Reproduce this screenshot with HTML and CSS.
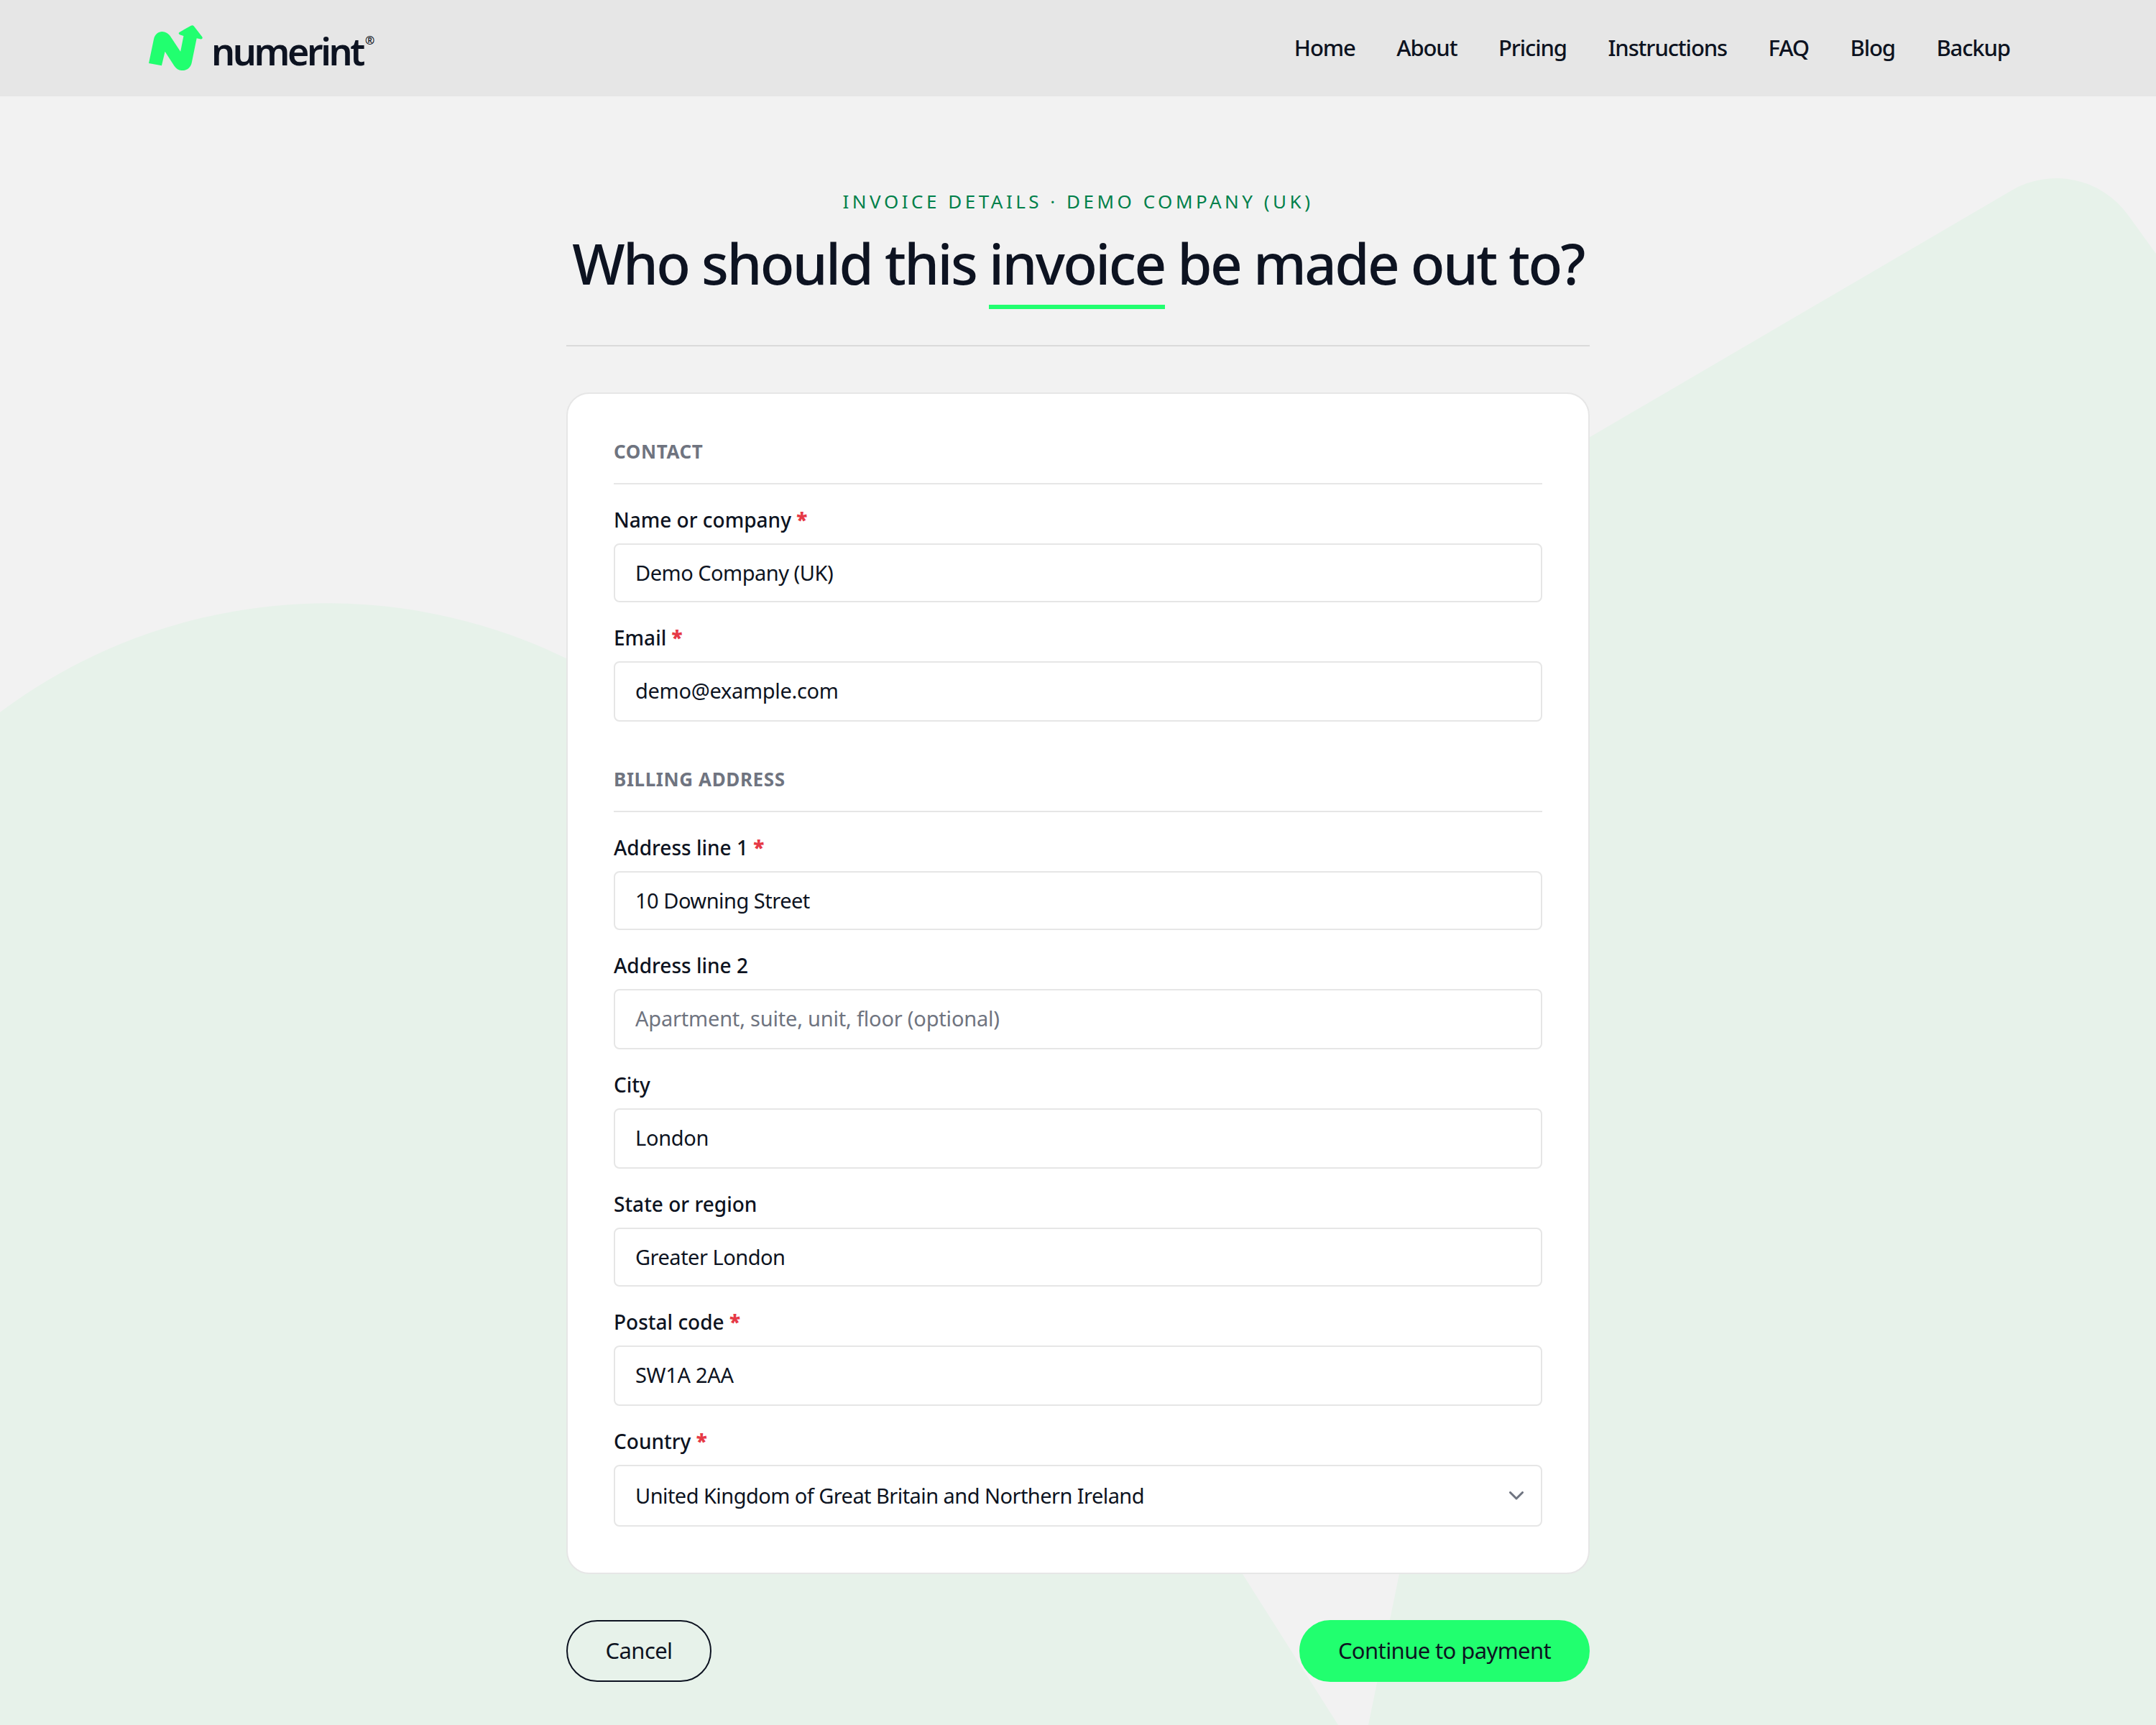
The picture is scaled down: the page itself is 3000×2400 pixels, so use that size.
FILE: index.html
```html
<!DOCTYPE html>
<html lang="en">

<head>
	<meta charset="UTF-8">
	<meta name="viewport" content="width=device-width, initial-scale=1.0">
	<title>Invoice details - numerint</title>
	<link rel="stylesheet" href="styles.css">
</head>

<body>
	<svg class="backdrop" viewBox="0 0 3000 2400" aria-hidden="true">
		<path d="M0 991A760 760 0 0 1 1099 1195L1862 2400H0Z" />
		<path d="M1904 2400L2190 1003L1850 820L2799 265A123 123 0 0 1 2961 299L3000 353V2400Z" />
	</svg>

	<header class="header">
		<a class="logo" href="#">
			<svg class="logo-mark" viewBox="80 74 226 190" aria-hidden="true">
				<path d="M80 234L101 133C109 94 153 90 174 126L213 185L226 119L210 114Q202 109 208 104L257 76Q264 72 269 78L304 123Q308 132 299 133L281 129L260 232C252 268 207 276 187 245L148 185L134 244Z" />
			</svg>
			<span class="logo-text">numerint</span><span class="logo-reg">®</span>
		</a>
		<nav class="nav">
			<a href="#">Home</a>
			<a href="#">About</a>
			<a href="#">Pricing</a>
			<a href="#">Instructions</a>
			<a href="#">FAQ</a>
			<a href="#">Blog</a>
			<a href="#">Backup</a>
		</nav>
	</header>

	<main class="page">
		<div class="intro">
			<p class="eyebrow">Invoice details · Demo Company (UK)</p>
			<h1>Who should this <span class="mark">invoice</span> be made out to?</h1>
		</div>

		<form>
			<div class="card">
				<section>
					<h2>Contact</h2>
					<div class="field">
						<label for="name">Name or company <b>*</b></label>
						<input type="text" id="name" value="Demo Company (UK)" required>
					</div>
					<div class="field tall">
						<label for="email">Email <b>*</b></label>
						<input type="email" id="email" value="demo@example.com" required>
					</div>
				</section>
				<section>
					<h2>Billing address</h2>
					<div class="field">
						<label for="line1">Address line 1 <b>*</b></label>
						<input type="text" id="line1" value="10 Downing Street" required>
					</div>
					<div class="field tall">
						<label for="line2">Address line 2</label>
						<input type="text" id="line2" placeholder="Apartment, suite, unit, floor (optional)">
					</div>
					<div class="field tall">
						<label for="city">City</label>
						<input type="text" id="city" value="London">
					</div>
					<div class="field">
						<label for="state">State or region</label>
						<input type="text" id="state" value="Greater London">
					</div>
					<div class="field tall">
						<label for="postal">Postal code <b>*</b></label>
						<input type="text" id="postal" value="SW1A 2AA" required>
					</div>
					<div class="field">
						<label for="country">Country <b>*</b></label>
						<div class="select">
							<select id="country" required>
								<option>United Kingdom of Great Britain and Northern Ireland</option>
							</select>
							<svg class="chevron" viewBox="0 0 20 12" aria-hidden="true">
								<path d="M1.500 1.500L10 10L18.500 1.500" />
							</svg>
						</div>
					</div>
				</section>
			</div>

			<div class="actions">
				<button type="button" class="btn outline">Cancel</button>
				<button type="submit" class="btn primary">Continue to payment</button>
			</div>
		</form>
	</main>
</body>

</html>
```
FILE: styles.css
```css
:root {
	--ink: #0d1321;
	--green: #21ff6f;
	--muted: #6f7480;
	--line: #e6e6e6;
}

*,
*:before,
*:after {
	box-sizing: border-box;
}

body,
h1,
h2,
p {
	margin: 0;
	font-weight: normal;
}

body {
	position: relative;
	height: 2400px;
	overflow: hidden;
	color: var(--ink);
	background: #f2f2f2;
	font-family: "Noto Sans", sans-serif;
}

a {
	color: inherit;
	text-decoration: none;
}

.backdrop {
	position: absolute;
	top: 0;
	left: 0;
	z-index: -1;
	width: 3000px;
	height: 2400px;
	fill: #e7f2ea;
}

/* header */

.header {
	display: flex;
	justify-content: space-between;
	height: 134px;
	padding: 0 203px 0 207px;
	background: #e6e6e6;
}

.logo {
	display: flex;
}

.logo-mark {
	width: 75px;
	height: 63px;
	margin: 35px 12px 0 0;
	fill: var(--green);
}

.logo-text {
	font-size: 52px;
	font-weight: 600;
	line-height: 142px;
	letter-spacing: -3.4px;
}

.logo-reg {
	margin: 46px 0 0 3px;
	font-size: 16px;
	font-weight: 600;
	line-height: 20px;
}

.nav {
	display: flex;
	gap: 57.5px;
	font-size: 31px;
	font-weight: 500;
	line-height: 132px;
	letter-spacing: -1.1px;
}

/* intro */

.page {
	width: 1424px;
	margin: 0 auto;
	padding-top: 126px;
}

.intro {
	padding-bottom: 64px;
	border-bottom: 2px solid #dadada;
	text-align: center;
	white-space: nowrap;
}

.eyebrow {
	margin-bottom: 16px;
	color: #00804a;
	font-size: 26px;
	line-height: 40px;
	letter-spacing: 4.5px;
	text-transform: uppercase;
}

h1 {
	font-size: 78px;
	font-weight: 500;
	line-height: 100px;
	letter-spacing: -2.6px;
}

.mark {
	padding-bottom: 5px;
	border-bottom: 6px solid var(--green);
}

/* form */

.card {
	margin-top: 64px;
	padding: 64px;
	border: 2px solid var(--line);
	border-radius: 32px;
	background: #fff;
}

section + section {
	margin-top: 64px;
}

h2 {
	padding-bottom: 28px;
	border-bottom: 2px solid var(--line);
	color: var(--muted);
	font-size: 26px;
	font-weight: 700;
	line-height: 32px;
	letter-spacing: 0.6px;
	text-transform: uppercase;
}

.field {
	display: flex;
	flex-direction: column;
	gap: 15px;
	margin-top: 31px;
}

label {
	font-size: 28px;
	font-weight: 500;
	line-height: 36px;
}

label b {
	color: #e63946;
	font-weight: 900;
}

input,
select {
	width: 100%;
	height: 82px;
	margin: 0;
	padding: 0 28px 2px;
	border: 2px solid var(--line);
	border-radius: 8px;
	color: var(--ink);
	background: #fff;
	font: inherit;
	font-size: 29px;
	letter-spacing: -0.5px;
}

.tall input {
	height: 84px;
	padding-bottom: 4px;
	letter-spacing: -0.3px;
}

input::placeholder {
	color: var(--muted);
	letter-spacing: -0.2px;
	opacity: 1;
}

.select {
	display: grid;
	align-items: center;
}

.select > * {
	grid-area: 1 / 1;
}

select {
	height: 86px;
	letter-spacing: -0.55px;
	appearance: none;
}

.chevron {
	justify-self: end;
	width: 20px;
	height: 12px;
	margin-right: 26px;
	fill: none;
	stroke: var(--muted);
	stroke-width: 3;
	stroke-linecap: round;
	stroke-linejoin: round;
}

.actions {
	display: flex;
	justify-content: space-between;
	margin-top: 64px;
}

.btn {
	height: 86px;
	padding: 0 0 2px;
	border: 2px solid var(--ink);
	border-radius: 43px;
	color: var(--ink);
	background: none;
	font: inherit;
	font-size: 31px;
	letter-spacing: -0.6px;
}

.outline {
	width: 202px;
}

.primary {
	width: 404px;
	border-color: var(--green);
	background: var(--green);
}
```
